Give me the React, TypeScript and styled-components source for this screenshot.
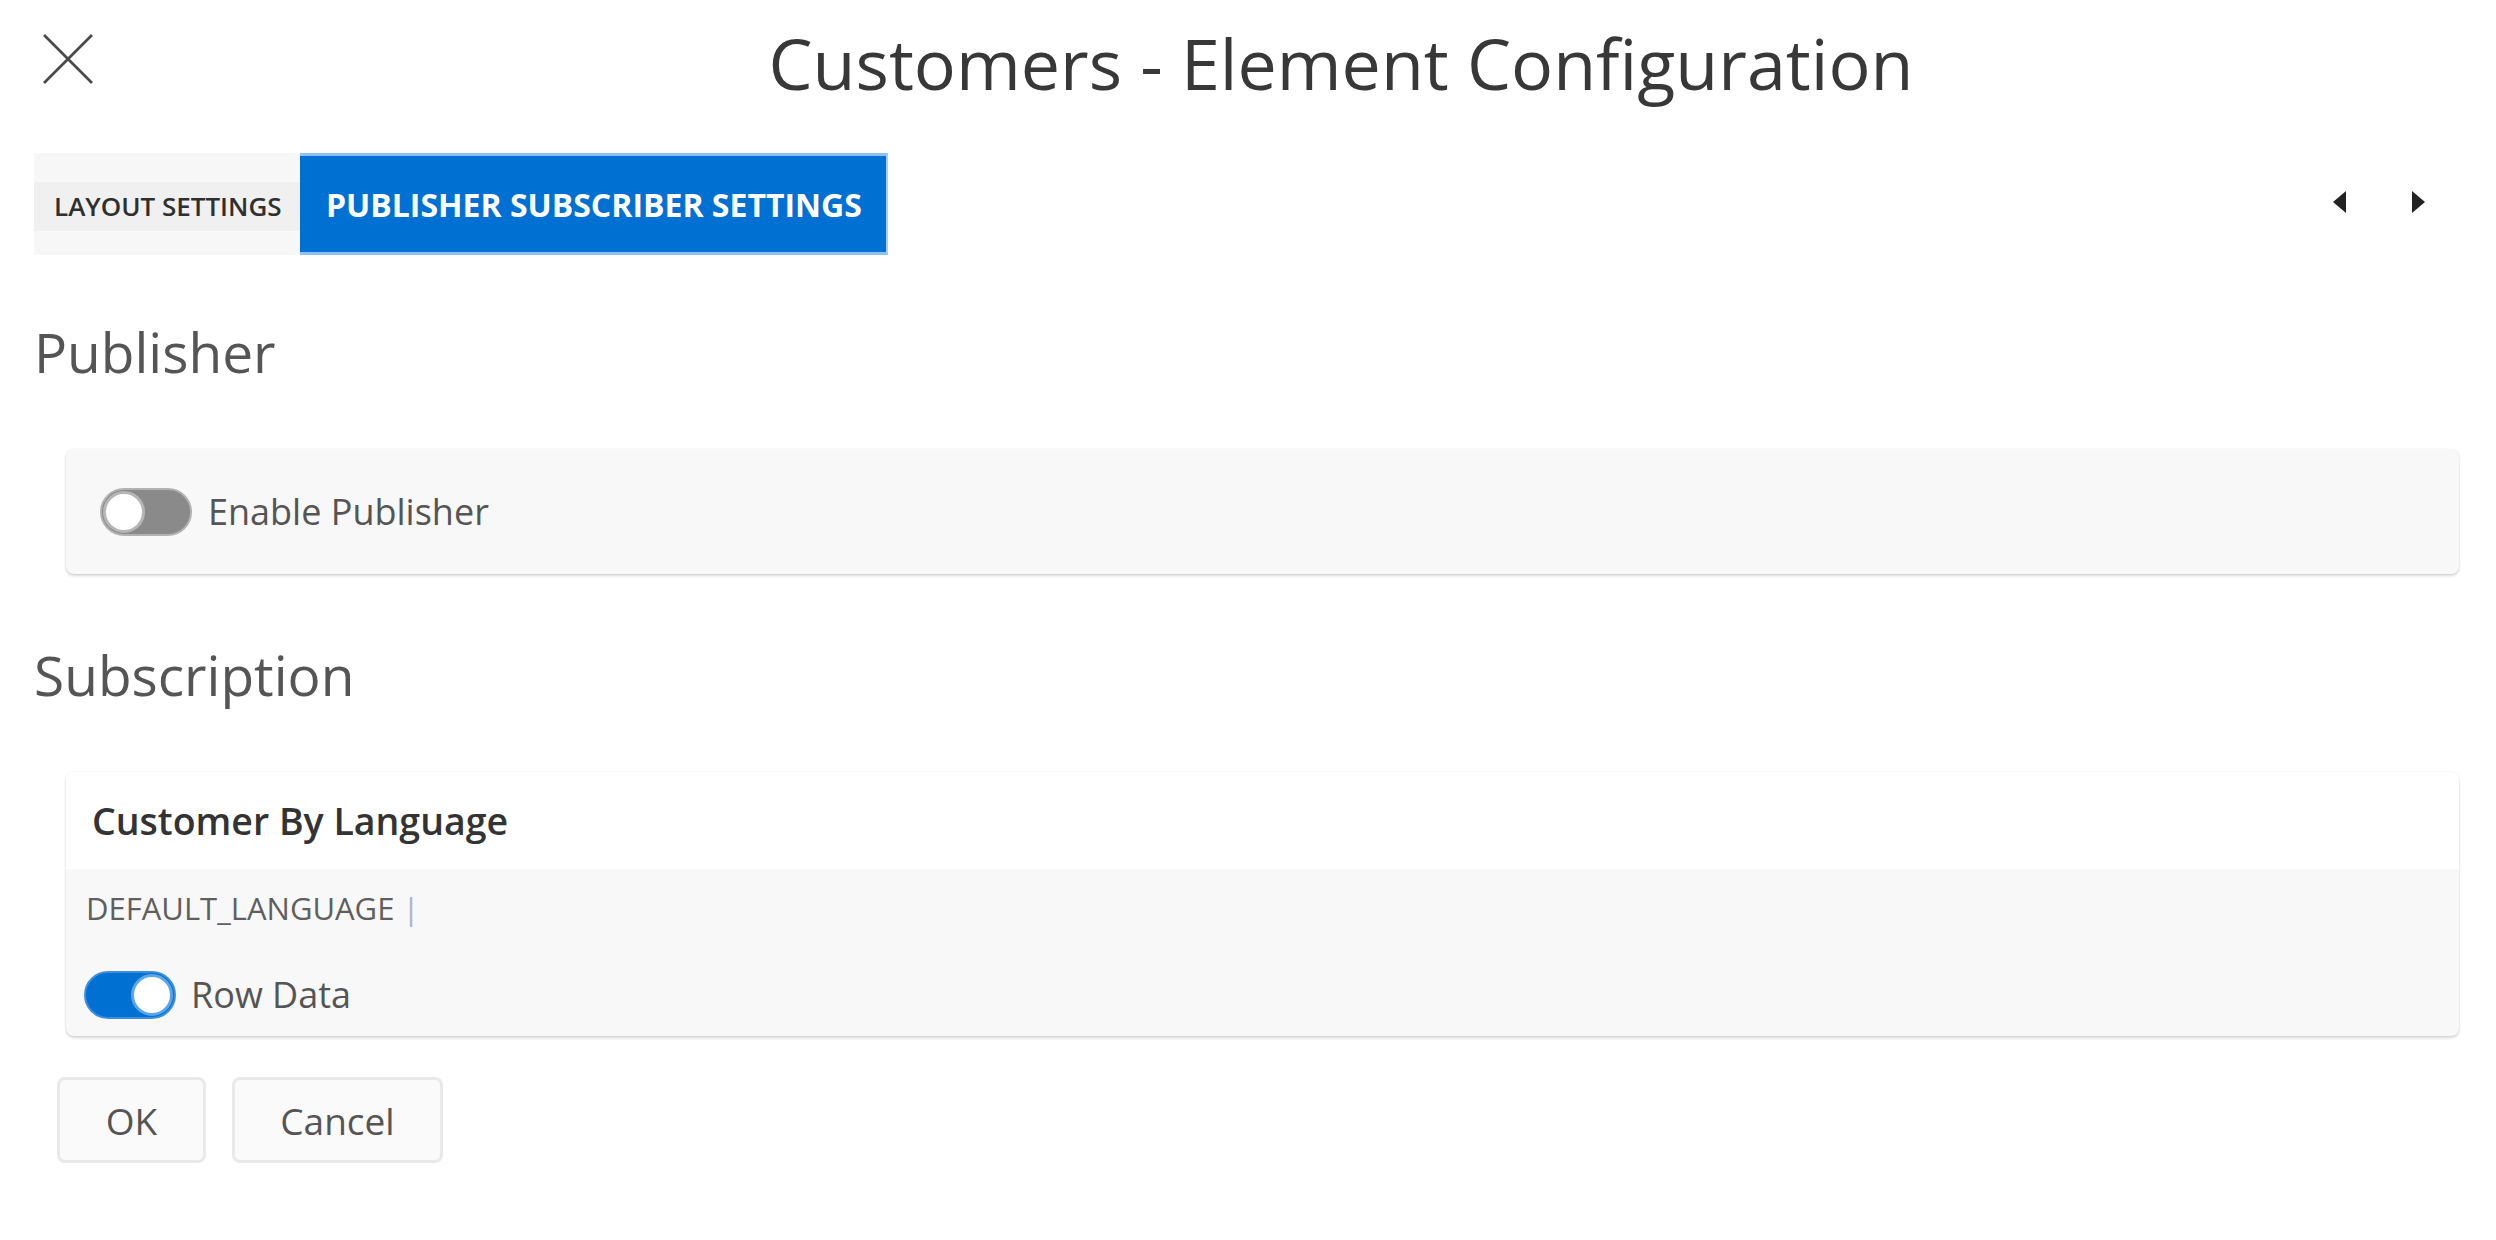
import React from "react";
import styled, { createGlobalStyle } from "styled-components";

const GlobalStyle = createGlobalStyle`
  html, body {
    margin: 0;
    padding: 0;
    background: #fff;
  }
  body {
    font-family: "Open Sans", "Noto Sans", sans-serif;
    color: #555;
  }
`;

const Dialog = styled.div`
  width: 2496px;
  min-height: 1240px;
  box-sizing: border-box;
`;

const Header = styled.header`
  display: flex;
  align-items: flex-start;
  height: 153px;
  padding-left: 34px;
  box-sizing: border-box;
`;

const CloseButton = styled.button`
  flex: none;
  width: 152px;
  padding: 33px 0 0 8px;
  border: 0;
  background: none;
  display: flex;
  align-items: flex-start;
  cursor: pointer;
`;

const Title = styled.h1`
  flex: 1;
  margin: 0;
  padding-top: 28px;
  text-align: center;
  font-size: 70px;
  line-height: 1;
  font-weight: 400;
  color: #383838;
`;

const TabBar = styled.nav`
  display: flex;
  justify-content: space-between;
  align-items: center;
  height: 102px;
  padding-left: 34px;
`;

const Tabs = styled.div`
  display: flex;
  align-self: stretch;
`;

const Tab = styled.div<{ $active?: boolean }>`
  display: flex;
  align-items: center;
  box-sizing: border-box;
  text-transform: uppercase;
  white-space: nowrap;
  ${(p) =>
    p.$active
      ? `
    background: #0070d2;
    border-top: 3px solid #8ec1ec;
    border-bottom: 3px solid #8ec1ec;
    border-right: 2px solid #a9cfee;
    padding: 0 24px 0 26px;
    color: #fff;
    font-size: 32px;
    font-weight: 700;
  `
      : `
    width: 266px;
    background: #f7f7f7;
    color: #2f2f2f;
    font-size: 26px;
    font-weight: 600;
  `}
`;

const TabLabel = styled.span`
  display: flex;
  align-items: center;
  width: 100%;
  height: 49px;
  margin-top: 4px;
  padding-left: 20px;
  background: #f0f0f0;
`;

const ArrowNav = styled.div`
  display: flex;
  gap: 40px;
  margin-right: 57px;
  margin-top: -4px;
`;

const ArrowButton = styled.button`
  width: 40px;
  height: 40px;
  border: 0;
  padding: 0;
  background: none;
  display: flex;
  align-items: center;
  justify-content: center;
  cursor: pointer;
`;

const Content = styled.main`
  padding: 0 37px 0 34px;
`;

const SectionTitle = styled.h2<{ $top?: number }>`
  margin: ${(p) => p.$top ?? 70}px 0 70px;
  font-size: 55px;
  line-height: 1;
  font-weight: 400;
  color: #555;
`;

const Card = styled.section`
  margin-left: 32px;
  background: #f8f8f8;
  border-radius: 8px;
  box-shadow: 0 2px 3px rgba(0, 0, 0, 0.16), 0 0 2px rgba(0, 0, 0, 0.07);
  overflow: hidden;
`;

const PublisherRow = styled.div`
  display: flex;
  align-items: center;
  gap: 16px;
  height: 125px;
  padding-left: 34px;
`;

const SwitchLabel = styled.span`
  font-size: 36px;
  color: #555;
`;

const Track = styled.span<{ $on?: boolean }>`
  position: relative;
  flex: none;
  width: 92px;
  height: 48px;
  box-sizing: border-box;
  border-radius: 24px;
  background: ${(p) => (p.$on ? "#0070d2" : "#8a8a8a")};
  border: 2px solid ${(p) => (p.$on ? "#3d8fdc" : "#b2b2b2")};
`;

const Knob = styled.span<{ $on?: boolean }>`
  position: absolute;
  top: 1px;
  ${(p) => (p.$on ? "right: 1px;" : "left: 1px;")}
  width: 42px;
  height: 42px;
  box-sizing: border-box;
  border-radius: 50%;
  background: #fff;
  border: 3px solid ${(p) => (p.$on ? "#5aa6e8" : "#b6b6b6")};
`;

const CardHeader = styled.div`
  display: flex;
  align-items: center;
  height: 97px;
  padding-left: 26px;
  background: #fff;
  font-size: 37.5px;
  font-weight: 600;
  color: #333;
`;

const CardBody = styled.div`
  padding: 24px 0 17px 18px;
`;

const FieldName = styled.div`
  font-size: 31px;
  line-height: 1;
  color: #5f5f5f;
  padding-left: 2px;
`;

const Caret = styled.span`
  color: #a3b6ca;
`;

const SwitchRow = styled.div`
  display: flex;
  align-items: center;
  gap: 15px;
  margin-top: 46px;
`;

const Footer = styled.div`
  display: flex;
  gap: 26px;
  margin-top: 41px;
  padding-left: 23px;
`;

const Button = styled.button<{ $w: number }>`
  width: ${(p) => p.$w}px;
  height: 86px;
  box-sizing: border-box;
  background: #fafafa;
  border: 3px solid #e9e9e9;
  border-radius: 8px;
  font-family: "Open Sans", "Noto Sans", sans-serif;
  font-size: 37px;
  color: #555;
  cursor: pointer;
`;

const Toggle = ({ on }: { on?: boolean }) => (
  <Track $on={on}>
    <Knob $on={on} />
  </Track>
);

const CloseIcon = () => (
  <svg width="52" height="52" viewBox="0 0 52 52">
    <path d="M2 2 L50 50 M50 2 L2 50" stroke="#4a4a4a" strokeWidth="2.8" fill="none" />
  </svg>
);

const Arrow = ({ dir }: { dir: "left" | "right" }) => (
  <svg width="16" height="24" viewBox="0 0 16 24">
    {dir === "left" ? (
      <path d="M15 1 L2 12 L15 23 Z" fill="#222" />
    ) : (
      <path d="M1 1 L14 12 L1 23 Z" fill="#222" />
    )}
  </svg>
);

const App = () => {
  return (
    <>
      <GlobalStyle />
      <Dialog>
        <Header>
          <CloseButton aria-label="Close">
            <CloseIcon />
          </CloseButton>
          <Title>Customers - Element Configuration</Title>
        </Header>

        <TabBar>
          <Tabs>
            <Tab>
              <TabLabel>Layout Settings</TabLabel>
            </Tab>
            <Tab $active>Publisher Subscriber Settings</Tab>
          </Tabs>
          <ArrowNav>
            <ArrowButton aria-label="Previous">
              <Arrow dir="left" />
            </ArrowButton>
            <ArrowButton aria-label="Next">
              <Arrow dir="right" />
            </ArrowButton>
          </ArrowNav>
        </TabBar>

        <Content>
          <SectionTitle $top={69}>Publisher</SectionTitle>
          <Card>
            <PublisherRow>
              <Toggle />
              <SwitchLabel>Enable Publisher</SwitchLabel>
            </PublisherRow>
          </Card>

          <SectionTitle $top={73}>Subscription</SectionTitle>
          <Card>
            <CardHeader>Customer By Language</CardHeader>
            <CardBody>
              <FieldName>
                DEFAULT_LANGUAGE <Caret>|</Caret>
              </FieldName>
              <SwitchRow>
                <Toggle on />
                <SwitchLabel>Row Data</SwitchLabel>
              </SwitchRow>
            </CardBody>
          </Card>

          <Footer>
            <Button $w={149}>OK</Button>
            <Button $w={211}>Cancel</Button>
          </Footer>
        </Content>
      </Dialog>
    </>
  );
};

export default App;
